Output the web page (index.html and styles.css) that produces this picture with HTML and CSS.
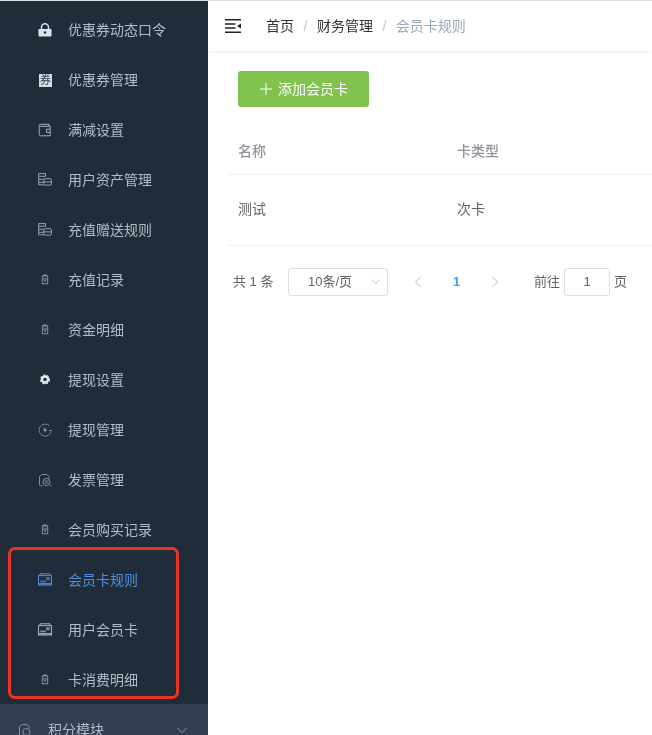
FILE: index.html
```html
<!DOCTYPE html>
<html lang="zh-CN">
<head>
<meta charset="utf-8">
<title>会员卡规则</title>
<link rel="stylesheet" href="styles.css">
</head>
<body>
<svg class="defs" width="0" height="0" aria-hidden="true">
  <defs>
    <symbol id="i-clip" viewBox="0 0 14 14"><path d="M5.500 2.800V2h3v.8M4.300 2.800h5.400v8H4.300z" fill="none" stroke="currentColor" stroke-width=".8"/><circle cx="7" cy="6.200" r="1.300" fill="none" stroke="currentColor" stroke-width=".7"/><path d="M7 7.500v1.500" stroke="currentColor" stroke-width=".7"/></symbol>
    <symbol id="i-coins" viewBox="0 0 14 14"><path d="M.7 .6h6.800v2.700H.7zM.7 3.300v3h5M.7 6.300v3h5M.7 9.300v2.500h5" fill="none" stroke="currentColor" stroke-width=".9"/><rect x="5.800" y="5.600" width="7.700" height="6.600" rx="1.800" fill="#212c3a" stroke="currentColor" stroke-width=".9"/><path d="M5.800 8.900h7.700" stroke="currentColor" stroke-width=".9"/></symbol>
    <symbol id="i-card" viewBox="0 0 14 14"><path d="M2 2.600V.8h10v1.800" fill="none" stroke="currentColor"/><rect x=".5" y="2.600" width="13" height="9.400" fill="none" stroke="currentColor"/><path d="M2.200 9.300h5.600V7.600H2.200zM8 4.200h3.800v3H8z" fill="currentColor" opacity=".7"/><path d="M.5 10.800h13" stroke="currentColor" stroke-width="1.400"/></symbol>
    <symbol id="i-chev" viewBox="0 0 12 12"><path d="M1.500 4l4.500 4.500L10.500 4" fill="none" stroke="currentColor" stroke-width="1"/></symbol>
  </defs>
</svg>
<div class="app">
  <aside class="sidebar">
    <ul class="menu">
      <li class="item"><svg class="icon" viewBox="0 0 14 14"><path d="M3.500 6V4.200a3.500 3.500 0 0 1 7 0V6" fill="none" stroke="#dfe4ea" stroke-width="1.500"/><path d="M.5 6h13v6.500a1 1 0 0 1-1 1H1.500a1 1 0 0 1-1-1z" fill="#dfe4ea"/><circle cx="7" cy="9.500" r="1.200" fill="#212c3a"/></svg><span>优惠券动态口令</span></li>
      <li class="item"><span class="quan">券</span><span>优惠券管理</span></li>
      <li class="item"><svg class="icon" viewBox="0 0 14 14"><path d="M2.500 1.300h8.500v2M1.200 3.300v8a1.500 1.500 0 0 0 1.500 1.500h9.500V3.300H2.500a1.300 1.300 0 0 1-1.300-1 1.300 1.300 0 0 1 1.300-1" fill="none" stroke="#b4bcc7" stroke-width=".9"/><path d="M12.200 6.200H8.500v3.300h3.700" fill="none" stroke="#b4bcc7" stroke-width=".9"/></svg><span>满减设置</span></li>
      <li class="item"><svg class="icon"><use href="#i-coins"/></svg><span>用户资产管理</span></li>
      <li class="item"><svg class="icon"><use href="#i-coins"/></svg><span>充值赠送规则</span></li>
      <li class="item"><svg class="icon"><use href="#i-clip"/></svg><span>充值记录</span></li>
      <li class="item"><svg class="icon"><use href="#i-clip"/></svg><span>资金明细</span></li>
      <li class="item"><svg class="icon" viewBox="0 0 14 14"><circle cx="7" cy="6.500" r="3" fill="none" stroke="#e4e8ed" stroke-width="2.400"/><circle cx="7" cy="6.500" r="4.400" fill="none" stroke="#e4e8ed" stroke-width="1.200" stroke-dasharray="2 1.700"/></svg><span>提现设置</span></li>
      <li class="item"><svg class="icon" viewBox="0 0 14 14"><path d="M13 8.500A6 6 0 1 1 11.500 3" fill="none" stroke="#a3acb8" stroke-width=".9" stroke-dasharray="2 .6"/><path d="M7 4.800v4.400M5.200 5.800L7 7.200l1.800-1.400M5.400 7.400h3.200M11 7.500h2.500" fill="none" stroke="#a3acb8" stroke-width=".8"/></svg><span>提现管理</span></li>
      <li class="item"><svg class="icon" viewBox="0 0 14 14"><path d="M4 1.500h5M3.500 1.500L1.500 3.500v8.500l1 1h2M9 1.500l2 2v2" fill="none" stroke="#8e99a6" stroke-width=".9"/><circle cx="8.500" cy="9" r="3.600" fill="none" stroke="#8e99a6" stroke-width=".9"/><path d="M6.500 8h4M6.500 10h4M12 12l1.500 1.500" stroke="#8e99a6" stroke-width=".9"/></svg><span>发票管理</span></li>
      <li class="item"><svg class="icon"><use href="#i-clip"/></svg><span>会员购买记录</span></li>
      <li class="item active"><svg class="icon"><use href="#i-card"/></svg><span>会员卡规则</span></li>
      <li class="item"><svg class="icon"><use href="#i-card"/></svg><span>用户会员卡</span></li>
      <li class="item"><svg class="icon"><use href="#i-clip"/></svg><span>卡消费明细</span></li>
      <li class="item parent"><svg class="icon" viewBox="0 0 14 14"><path d="M4 1.500h5M3.500 1.500L1.500 3.500v8.500l1 1h2M9 1.500l2 2v2" fill="none" stroke="#8e99a6" stroke-width=".9"/><circle cx="8.500" cy="9" r="3.600" fill="none" stroke="#8e99a6" stroke-width=".9"/></svg><span class="grow">积分模块</span><svg class="chev"><use href="#i-chev"/></svg></li>
    </ul>
  </aside>
  <main class="main">
    <header class="navbar">
      <svg class="toggle" viewBox="0 0 16 14"><path d="M0 .75h16M0 13.250h16M0 5h10.500M0 9h10.500" stroke="#222" stroke-width="1.500"/><path d="M16 4.500v5L12 7z" fill="#222"/></svg>
      <nav class="crumbs">
        <span class="crumb">首页</span><span class="sep">/</span><span class="crumb">财务管理</span><span class="sep">/</span><span class="crumb current">会员卡规则</span>
      </nav>
    </header>
    <section class="content">
      <button class="add" type="button"><svg class="plus" viewBox="0 0 12 12"><path d="M6 0v12M0 6h12" stroke="#fff" stroke-width="1"/></svg>添加会员卡</button>
      <table class="table">
        <thead><tr><th class="col-name">名称</th><th>卡类型</th></tr></thead>
        <tbody><tr><td>测试</td><td>次卡</td></tr></tbody>
      </table>
      <div class="pager">
        <span class="total">共 1 条</span>
        <div class="size"><span>10条/页</span><svg class="size-chev"><use href="#i-chev"/></svg></div>
        <div class="pages">
          <svg class="arrow" viewBox="0 0 8 12"><path d="M6.500 1L1.500 6l5 5" fill="none" stroke="#b4b8c0"/></svg>
          <span class="num">1</span>
          <svg class="arrow" viewBox="0 0 8 12"><path d="M1.500 1l5 5-5 5" fill="none" stroke="#b4b8c0"/></svg>
        </div>
        <div class="jump"><span>前往</span><span class="jump-box">1</span><span>页</span></div>
      </div>
    </section>
  </main>
</div>
<div class="annotation"></div>
</body>
</html>
```
FILE: styles.css
```css
* { box-sizing: border-box; }
html, body { margin: 0; padding: 0; height: 735px; overflow: hidden; background: #fff; }
body { font-family: "Liberation Sans", "Noto Sans CJK SC", sans-serif; font-size: 14px; color: #606266; border-top: 1px solid #dcdde2; }
.defs { position: absolute; }
.app { display: flex; height: 734px; will-change: transform; }

.sidebar { width: 208px; flex: none; background: #212c3a; overflow: hidden; padding-top: 3px; }
.menu { list-style: none; margin: 0; padding: 0; }
.item { display: flex; align-items: center; height: 50px; padding: 2px 0 0 38px; color: #b4bcc7; font-size: 14px; line-height: 1; }
.item.active { color: #4d90e0; }
.icon { width: 14px; height: 14px; margin-right: 16px; flex: none; color: #a8b1bd; }
.item.active .icon { color: #4d90e0; }
.quan { width: 13px; height: 13px; margin: 0 16px 0 1px; background: #d5dbe2; color: #2c3644; font-size: 11px; line-height: 13px; text-align: center; flex: none; }
.parent { background: #323e51; padding-left: 18px; padding-right: 20px; }
.parent .icon { color: #8e99a6; }
.grow { flex: 1; }
.chev { width: 12px; height: 12px; color: #8e99a6; }

.main { flex: 1; min-width: 0; overflow: hidden; }
.navbar { display: flex; align-items: center; height: 50px; padding-left: 17px; box-shadow: 0 1px 4px rgba(0, 21, 41, .08); }
.toggle { width: 16px; height: 14px; flex: none; margin-right: 25px; }
.crumbs { display: flex; align-items: center; line-height: 1; }
.crumb { color: #303133; }
.crumb.current { color: #97a8be; }
.sep { color: #c0c4cc; margin: 0 9.500px; }

.content { padding: 20px 0 0 20px; }
.add { display: flex; align-items: center; height: 36px; width: 131px; margin-left: 10px; padding: 0 0 1px 22px; background: #82c350; border: 0; border-radius: 3px; color: #fff; font: inherit; line-height: 1; }
.plus { width: 12px; height: 12px; margin-right: 6px; flex: none; }

.table { width: 100%; min-width: 424px; margin-top: 20px; border-collapse: collapse; table-layout: fixed; line-height: 1; }
.table th, .table td { padding: 0 10px; text-align: left; border-bottom: 1px solid #ebeef5; }
.table th { height: 47px; padding-top: 2px; color: #909399; font-weight: 500; }
.table td { height: 71px; color: #606266; font-weight: 400; padding-bottom: 2px; }
.col-name { width: 219px; }

.pager { display: flex; align-items: center; height: 28px; margin-top: 22px; padding-left: 5px; font-size: 13px; color: #606266; line-height: 1; }
.total { width: 55px; flex: none; }
.size { display: flex; align-items: center; width: 100px; height: 28px; padding-left: 19px; border: 1px solid #dcdfe6; border-radius: 3px; flex: none; }
.size span { flex: 1; }
.size-chev { width: 11px; height: 11px; margin-right: 6px; color: #c0c4cc; }
.pages { display: flex; align-items: center; margin-left: 26px; flex: none; }
.arrow { width: 8px; height: 12px; flex: none; }
.num { width: 69px; text-align: center; color: #409eff; font-weight: 700; }
.jump { display: flex; align-items: center; margin-left: 35px; flex: none; }
.jump-box { width: 46px; height: 28px; margin: 0 4px; border: 1px solid #dcdfe6; border-radius: 3px; line-height: 26px; text-align: center; }

.annotation { position: absolute; left: 8px; top: 547px; width: 171px; height: 152px; border: 3px solid #e8342a; border-radius: 7px; }
```
